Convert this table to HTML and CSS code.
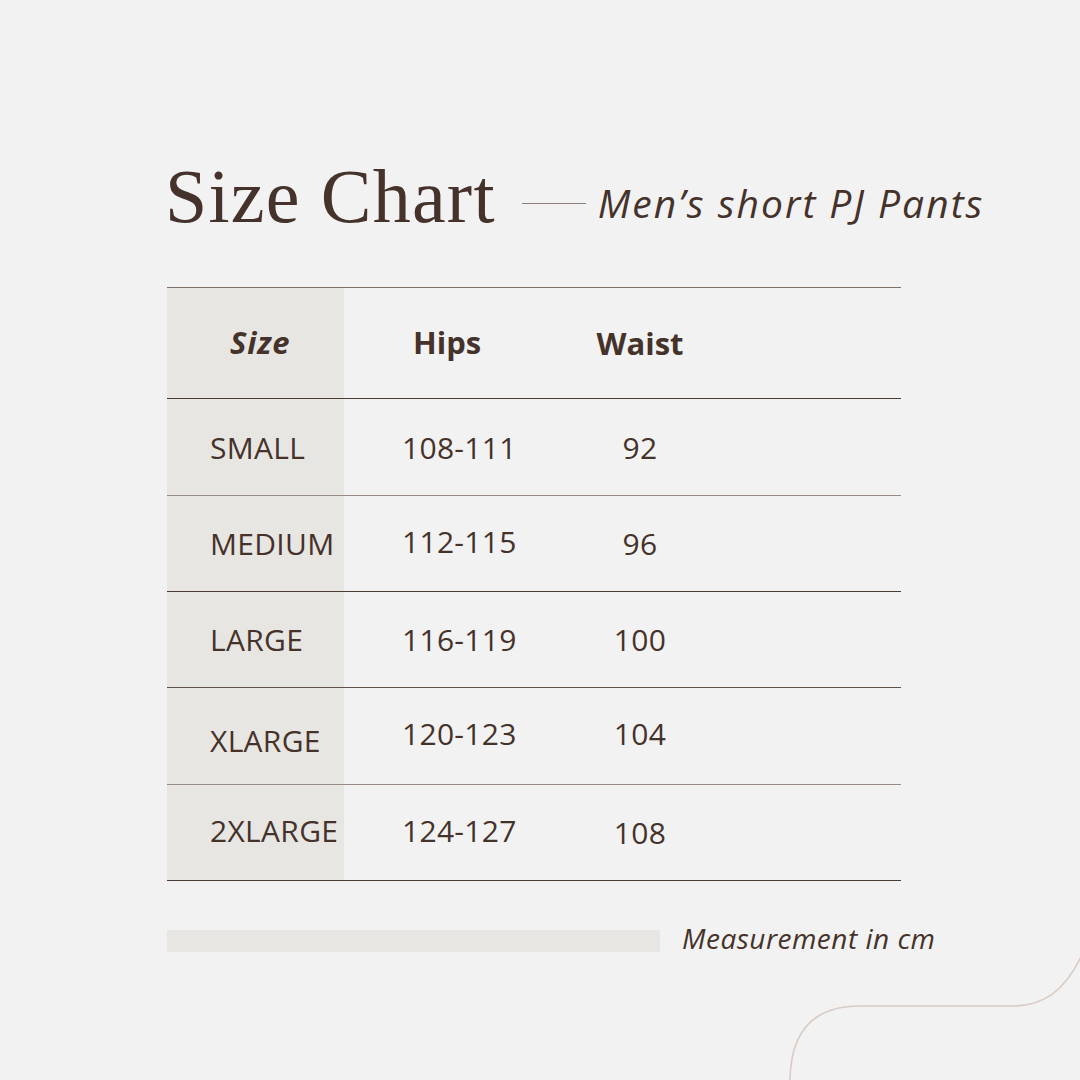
FILE: index.html
```html
<!DOCTYPE html>
<html lang="en">
<head>
<meta charset="utf-8">
<title>Size Chart</title>
<link rel="stylesheet" href="styles.css">
</head>
<body>
<div class="page">
  <header class="heading">
    <h1 class="title">Size Chart</h1>
    <span class="dash"></span>
    <span class="subtitle">Men’s short PJ Pants</span>
  </header>

  <div class="chart">
    <div class="row head">
      <div class="cell size"><span class="h-size">Size</span></div>
      <div class="cell hips"><span class="h-hips">Hips</span></div>
      <div class="cell waist"><span>Waist</span></div>
      <div class="cell rest"></div>
    </div>
    <div class="row tall line-gray">
      <div class="cell size">SMALL</div>
      <div class="cell hips">108-111</div>
      <div class="cell waist">92</div>
      <div class="cell rest"></div>
    </div>
    <div class="row line-dark">
      <div class="cell size">MEDIUM</div>
      <div class="cell hips"><span class="up">112-115</span></div>
      <div class="cell waist">96</div>
      <div class="cell rest"></div>
    </div>
    <div class="row line-mid">
      <div class="cell size">LARGE</div>
      <div class="cell hips">116-119</div>
      <div class="cell waist">100</div>
      <div class="cell rest"></div>
    </div>
    <div class="row tall line-gray">
      <div class="cell size"><span class="down">XLARGE</span></div>
      <div class="cell hips"><span class="up">120-123</span></div>
      <div class="cell waist"><span class="up">104</span></div>
      <div class="cell rest"></div>
    </div>
    <div class="row line-dark">
      <div class="cell size"><span class="up">2XLARGE</span></div>
      <div class="cell hips"><span class="up">124-127</span></div>
      <div class="cell waist">108</div>
      <div class="cell rest"></div>
    </div>
  </div>

  <footer class="foot">
    <span class="bar"></span>
    <span class="note">Measurement in cm</span>
  </footer>

  <svg class="curve" width="300" height="140" viewBox="780 940 300 140" aria-hidden="true">
    <path d="M790 1082 C790 1030 815 1006 860 1006 L1012 1006 C1045 1006 1065 990 1082 955" fill="none" stroke="#d9ccc5" stroke-width="1.6"/>
  </svg>
</div>
</body>
</html>
```

FILE: styles.css
```css
* { box-sizing: border-box; }
html, body { margin: 0; padding: 0; }
body {
  background: #f2f2f2;
  color: #45322a;
  font-family: "Open Sans", "Liberation Sans", sans-serif;
}
.page {
  position: relative;
  width: 1080px;
  height: 1080px;
  overflow: hidden;
  padding: 153px 0 0 165px;
}
.heading {
  display: flex;
  align-items: center;
  height: 89px;
}
.title {
  margin: -3px 0 0 0;
  font-family: "Liberation Serif", serif;
  font-weight: 400;
  font-size: 76px;
  line-height: 84px;
  letter-spacing: 1.2px;
  color: #45322a;
}
.dash {
  width: 64px;
  height: 1px;
  background: #8c807a;
  margin: 12px 12px 0 26px;
}
.subtitle {
  font-family: "Open Sans", sans-serif;
  font-style: italic;
  font-size: 39px;
  line-height: 48px;
  letter-spacing: 2px;
  margin-top: 10px;
}
.chart {
  width: 734px;
  margin: 45px 0 0 2px;
  border-top: 1px solid #7d716a;
}
.row {
  display: grid;
  grid-template-columns: 177px 216px 160px 1fr;
  height: 96px;
  border-bottom: 1px solid #4a3a31;
}
.row.tall { height: 97px; }
.row.head { height: 111px; }
.row.line-gray { border-bottom-color: #968b85; }
.row.line-mid { border-bottom-color: #5f524b; }
.cell {
  display: flex;
  align-items: center;
  font-size: 30px;
  letter-spacing: 0.3px;
}
.cell.size {
  background: #e8e6e2;
  padding-left: 43px;
}
.cell.hips { padding-left: 58px; }
.cell.waist { justify-content: center; }
.head .cell {
  font-weight: 700;
  font-size: 31px;
  letter-spacing: 0;
}
.h-size { font-style: italic; margin-left: 20px; letter-spacing: 0.8px; margin-top: -3px; }
.h-hips { margin-left: 11px; margin-top: -3px; }
.up { margin-top: -5px; }
.down { margin-top: 8px; }
.foot {
  display: flex;
  align-items: center;
  margin: 44px 0 0 2px;
}
.bar {
  width: 493px;
  height: 22px;
  background: #e8e6e2;
}
.note {
  margin-left: 22px;
  font-style: italic;
  font-size: 28px;
  letter-spacing: 0.5px;
  margin-top: -6px;
}
.curve {
  position: absolute;
  left: 780px;
  top: 940px;
}
```
